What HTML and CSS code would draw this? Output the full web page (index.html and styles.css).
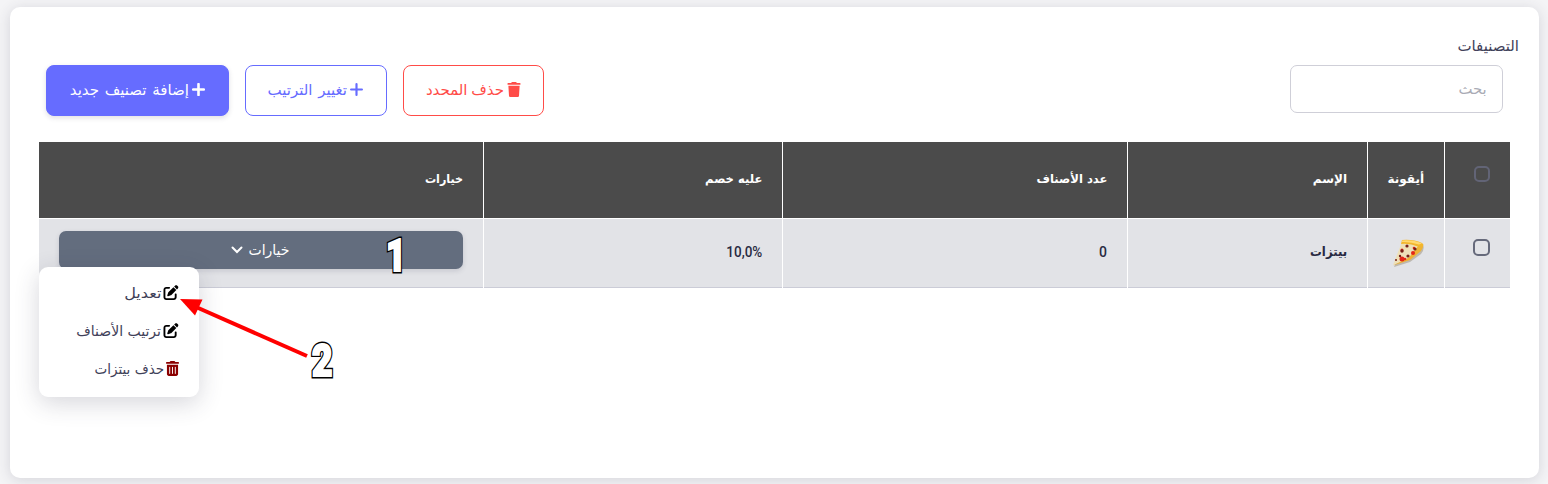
FILE: index.html
```html
<!DOCTYPE html>
<html lang="ar" dir="rtl">
<head>
<meta charset="utf-8">
<title>التصنيفات</title>
<link rel="stylesheet" href="styles.css">
</head>
<body>
<svg class="defs" aria-hidden="true">
  <symbol id="plus" viewBox="0 0 12 12"><path d="M6 1v10M1 6h10" fill="none" stroke="currentColor" stroke-linecap="round"/></symbol>
  <symbol id="trash" viewBox="0 0 448 512"><path fill="currentColor" d="M135.200 17.700L128 32H32C14.300 32 0 46.300 0 64s14.300 32 32 32h384c17.700 0 32-14.300 32-32s-14.300-32-32-32h-96l-7.200-14.300C307.400 6.800 296.300 0 284.200 0H163.800c-12.100 0-23.200 6.800-28.600 17.700zM416 128H32l21.200 339c1.600 25.300 22.600 45 47.900 45h245.800c25.300 0 46.300-19.700 47.900-45z"/></symbol>
  <symbol id="bin" viewBox="0 0 448 512"><path fill="currentColor" fill-rule="evenodd" d="M135.200 17.700C140.600 6.800 151.700 0 163.800 0h120.400c12.100 0 23.200 6.800 28.600 17.700L320 32h96c17.700 0 32 14.300 32 32s-14.300 32-32 32H32C14.300 96 0 81.700 0 64s14.300-32 32-32h96zM32 128h384v320c0 35.300-28.700 64-64 64H96c-35.300 0-64-28.700-64-64zm96 64c-8.800 0-16 7.200-16 16v224c0 8.800 7.200 16 16 16s16-7.200 16-16V208c0-8.800-7.200-16-16-16zm96 0c-8.800 0-16 7.200-16 16v224c0 8.800 7.200 16 16 16s16-7.200 16-16V208c0-8.800-7.200-16-16-16zm96 0c-8.800 0-16 7.200-16 16v224c0 8.800 7.200 16 16 16s16-7.200 16-16V208c0-8.800-7.200-16-16-16z"/></symbol>
  <symbol id="edit" viewBox="0 0 512 512"><path fill="currentColor" d="M471.600 21.700c-21.900-21.900-57.300-21.900-79.200 0L362.300 51.700l97.900 97.900 30.100-30.100c21.900-21.900 21.900-57.300 0-79.200zM172.400 241.700c-6.100 6.100-10.800 13.600-13.500 21.900l-29.600 88.800c-2.900 8.600-.6 18.100 5.800 24.600s15.900 8.700 24.600 5.800l88.800-29.600c8.200-2.700 15.700-7.400 21.900-13.500L437.700 172.300l-98-98zM96 64C43 64 0 107 0 160v256c0 53 43 96 96 96h256c53 0 96-43 96-96v-96c0-17.700-14.300-32-32-32s-32 14.300-32 32v96c0 17.700-14.300 32-32 32H96c-17.700 0-32-14.300-32-32V160c0-17.700 14.300-32 32-32h96c17.700 0 32-14.300 32-32s-14.300-32-32-32z"/></symbol>
</svg>
<main class="card">
  <h1 class="title"><span class="t">التصنيفات</span></h1>
  <div class="toolbar">
    <div class="search"><span class="t wide">بحث</span></div>
    <div class="actions">
      <button class="btn danger"><svg class="ic-trash"><use href="#trash"/></svg><span class="t">حذف المحدد</span></button>
      <button class="btn outline"><svg class="ic-plus"><use href="#plus"/></svg><span class="t">تغيير الترتيب</span></button>
      <button class="btn primary"><svg class="ic-plus"><use href="#plus"/></svg><span class="t">إضافة تصنيف جديد</span></button>
    </div>
  </div>
  <div class="table">
    <div class="th"><i class="check"></i></div>
    <div class="th"><span class="t">أيقونة</span></div>
    <div class="th"><span class="t">الإسم</span></div>
    <div class="th"><span class="t snug">عدد الأصناف</span></div>
    <div class="th"><span class="t snug">عليه خصم</span></div>
    <div class="th"><span class="t narrow">خيارات</span></div>
    <div class="td"><i class="check"></i></div>
    <div class="td pizza-cell">
      <svg class="pizza" viewBox="0 0 32 28">
        <path d="M12 3L31 6q2 4-2 9l-11 8L2 28z" fill="#9a8d78" opacity=".5"/>
        <path d="M10 3L27 7l-9 13L1 26z" fill="#eee0b8"/>
        <path d="M27 6l4-1q1 3-2 7l-11 9L1 26.500l16-8z" fill="#eeb336"/>
        <path d="M10 1q11-1 20 3 2 1 1 3l-4 1Q18 4 9 5z" fill="#f3b62c"/>
        <path d="M10 1.500q11-1 20 3l-3 1Q18 2.500 10 3z" fill="#ffd970"/>
        <g fill="#e32618"><circle cx="10" cy="11" r="1.500"/><circle cx="21" cy="14" r="2"/><circle cx="10" cy="20" r="2.500"/><circle cx="13" cy="20" r="1.300"/><circle cx="22" cy="9" r="1.300"/></g>
        <g fill="#762018"><circle cx="15" cy="7" r="1.600"/><circle cx="10" cy="12" r="1.700"/><circle cx="16" cy="17" r="1.600"/><circle cx="23" cy="10" r="1.600"/><circle cx="8" cy="17" r="1.200"/><circle cx="4" cy="21" r="1"/></g>
      </svg>
    </div>
    <div class="td"><span class="t name">بيتزات</span></div>
    <div class="td num">0</div>
    <div class="td num"><bdi class="t snug" dir="ltr">10,0%</bdi></div>
    <div class="td options"><button class="drop"><span class="t">خيارات</span><svg class="chev" viewBox="0 0 12 8"><path d="M1.500 1.500L6 6l4.500-4.500" fill="none" stroke="currentColor" stroke-width="2" stroke-linecap="round"/></svg></button></div>
  </div>
</main>
<div class="menu">
  <a class="item"><svg class="ic-edit"><use href="#edit"/></svg><span class="t wider">تعديل</span></a>
  <a class="item"><svg class="ic-edit"><use href="#edit"/></svg><span class="t">ترتيب الأصناف</span></a>
  <a class="item"><svg class="ic-bin"><use href="#bin"/></svg><span class="t snug">حذف بيتزات</span></a>
</div>
<svg class="notes" viewBox="0 0 1548 484" direction="ltr">
  <path d="M196 307L307 356" stroke="#f00" stroke-width="4"/>
  <path d="M180 299l22.500.5-7.500 16z" fill="#f00"/>
  <g class="mark" transform="translate(386 271) scale(.78 1)"><text class="edge">1</text><text class="face">1</text></g>
  <g class="mark" transform="translate(312 376) scale(.8 1)"><text class="edge">2</text><text class="face">2</text></g>
</svg>
</body>
</html>
```
FILE: styles.css
```css
* { box-sizing: border-box; }
body {
  margin: 0;
  height: 484px;
  padding: 7px 9px 6px 10px;
  overflow: hidden;
  background: #f4f4f6;
  font-family: "DejaVu Sans", sans-serif;
  font-size: 14px;
  color: #3f4159;
}
.defs { position: absolute; width: 0; height: 0; }
.t { display: inline-block; white-space: nowrap; transform-origin: right center; }
.wide { transform: scaleX(1.06); }
.wider { transform: scaleX(1.15); }
.snug { transform: scaleX(.965); }
.narrow { transform: scaleX(.93); }
.card {
  height: 471px;
  padding: 28px 29px 0;
  border-radius: 10px;
  background: #fff;
  box-shadow: 0 2px 14px rgba(50, 50, 75, .16);
}
.title { margin: 0 -9px 0 0; height: 30px; font-size: 15px; line-height: 22px; font-weight: 400; }
.toolbar { display: flex; justify-content: space-between; padding: 0 7px; height: 77px; }
.search {
  width: 213px;
  height: 48px;
  padding: 0 15px;
  border: 1px solid #cfcfd8;
  border-radius: 7px;
  line-height: 46px;
  color: #a9abb5;
}
.actions { display: flex; gap: 16px; }
.btn {
  display: flex;
  align-items: center;
  gap: 3px;
  height: 51px;
  padding: 0 23px 2px 15px;
  border: 1px solid currentColor;
  border-radius: 8px;
  background: #fff;
  font: 15px "DejaVu Sans", sans-serif;
  word-spacing: 1px;
}
.danger { width: 141px; padding-right: 22px; color: #ff4c48; word-spacing: -1px; }
.outline { width: 142px; color: #666cff; }
.primary { width: 183px; border-color: #666cff; color: #fff; background: #666cff; box-shadow: 0 2px 5px rgba(50, 50, 75, .15); }
.ic-trash { width: 14px; height: 15px; flex: none; }
.ic-plus { width: 13px; height: 13px; flex: none; stroke-width: 2; }
.primary .ic-plus { stroke-width: 2.4; }
.table {
  display: grid;
  grid-template-columns: 65px 76px 239px 344px 298px 444px;
  grid-template-rows: 76px 69px;
  gap: 1px;
}
.th, .td { display: flex; align-items: center; padding: 0 20px; }
.th { background: #4b4b4b; color: #fff; font-size: 12px; font-weight: 700; padding-bottom: 3px; }
.td { background: #e2e3e7; border-bottom: 1px solid #cbccd7; color: #282a42; font-size: 13px; padding-bottom: 3px; }
.name { font-weight: 700; transform: scaleX(.9); }
.num { font: 500 14px Roboto, sans-serif; }
.check { width: 17px; height: 17px; border: 2px solid #666a7b; border-radius: 5px; margin-bottom: 9px; }
.th .check { width: 16px; height: 16px; border-color: #626476; }
.pizza-cell { padding: 0 20px; }
.pizza { width: 32px; height: 28px; flex: none; }
.options { align-items: flex-start; padding-top: 12px; }
.drop {
  display: flex;
  align-items: center;
  justify-content: center;
  gap: 6px;
  width: 404px;
  height: 38px;
  padding: 0 2px 0 0;
  border: 0;
  border-radius: 7px;
  background: #636d7e;
  color: #fff;
  font: 14px "DejaVu Sans", sans-serif;
  box-shadow: 0 2px 5px rgba(50, 50, 75, .15);
}
.chev { width: 12px; height: 8px; }
.menu {
  position: absolute;
  left: 39px;
  top: 267px;
  width: 160px;
  height: 130px;
  padding: 7px 20px;
  border-radius: 9px;
  background: #fff;
  box-shadow: 0 6px 24px rgba(50, 50, 75, .2);
}
.item { display: flex; align-items: center; height: 38px; gap: 2px; padding-bottom: 1px; }
.ic-edit { width: 16px; height: 15px; color: #000; flex: none; }
.ic-bin { width: 13px; height: 15px; color: #8b0000; flex: none; }
.notes { position: absolute; left: 0; top: 0; width: 1548px; height: 484px; pointer-events: none; }
.mark { font: 900 44px Roboto, sans-serif; stroke-linejoin: miter; }
.edge { fill: #000; stroke: #000; stroke-width: 5px; }
.face { fill: #fff; stroke: #fff; stroke-width: 2.2px; }
```
